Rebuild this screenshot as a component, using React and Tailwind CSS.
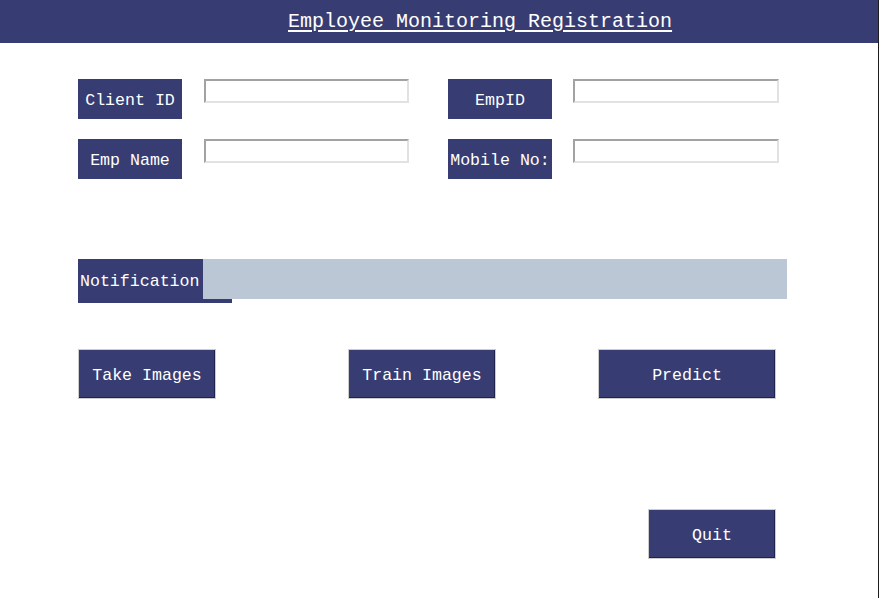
import React from 'react'

// Employee monitoring registration window (Tk-style form)

const NAVY = 'bg-[#373d72]'
const mono = { fontFamily: '"Liberation Mono", "DejaVu Sans Mono", monospace' }

function Label({ children, className = '' }) {
  return (
    <div
      className={`${NAVY} text-white text-[16.6px] flex items-center justify-center shrink-0 ${className}`}
      style={mono}
    >
      {children}
    </div>
  )
}

function Field({ className = '' }) {
  return (
    <input
      className={`h-[24px] bg-white border-2 border-t-[#a2a2a2] border-l-[#a2a2a2] border-b-[#e2e2e2] border-r-[#e2e2e2] outline-none shrink-0 self-start ${className}`}
    />
  )
}

function TkButton({ children, className = '' }) {
  return (
    <button
      className={`${NAVY} h-[50px] pt-[5px] text-white text-[16.6px] border border-[#cdcdcd] shadow-[inset_-1px_-1px_0_#1f2249] shrink-0 ${className}`}
      style={mono}
    >
      {children}
    </button>
  )
}

export default function App() {
  return (
    <div className="w-[879px] h-[598px] bg-white border-r border-[#1c1c1c] overflow-hidden flex flex-col">
      {/* ── Header ─────────────────────────────────────────── */}
      <div className={`${NAVY} h-[43px] shrink-0 flex items-center pl-[288px]`}>
        <h1
          className="text-white text-[20px] leading-none underline underline-offset-[3px] decoration-[2px] mt-[1px]"
          style={mono}
        >
          Employee Monitoring Registration
        </h1>
      </div>

      {/* ── Form rows ──────────────────────────────────────── */}
      <div className="flex items-start mt-[36px] ml-[78px]">
        <Label className="w-[104px] h-[40px] pt-[4px]">Client ID</Label>
        <Field className="ml-[22px] w-[205px]" />
        <Label className="ml-[39px] w-[104px] h-[40px] pt-[4px]">EmpID</Label>
        <Field className="ml-[21px] w-[206px]" />
      </div>

      <div className="flex items-start mt-[20px] ml-[78px]">
        <Label className="w-[104px] h-[40px] pt-[4px]">Emp Name</Label>
        <Field className="ml-[22px] w-[205px]" />
        <Label className="ml-[39px] w-[104px] h-[40px] pt-[4px]">Mobile No:</Label>
        <Field className="ml-[21px] w-[206px]" />
      </div>

      {/* ── Notification ───────────────────────────────────── */}
      <div className="flex items-start mt-[80px] ml-[78px]">
        <Label className="w-[154px] h-[44px] !justify-start pl-[2px] pt-[2px]">Notification</Label>
        <div className="ml-[-29px] w-[584px] h-[40px] bg-[#bbc7d5]" />
      </div>

      {/* ── Actions ────────────────────────────────────────── */}
      <div className="flex items-start mt-[46px] ml-[78px]">
        <TkButton className="w-[138px]">Take Images</TkButton>
        <TkButton className="ml-[132px] w-[148px]">Train Images</TkButton>
        <TkButton className="ml-[102px] w-[178px]">Predict</TkButton>
      </div>

      <div className="flex mt-[110px] ml-[648px]">
        <TkButton className="w-[128px]">Quit</TkButton>
      </div>
    </div>
  )
}
